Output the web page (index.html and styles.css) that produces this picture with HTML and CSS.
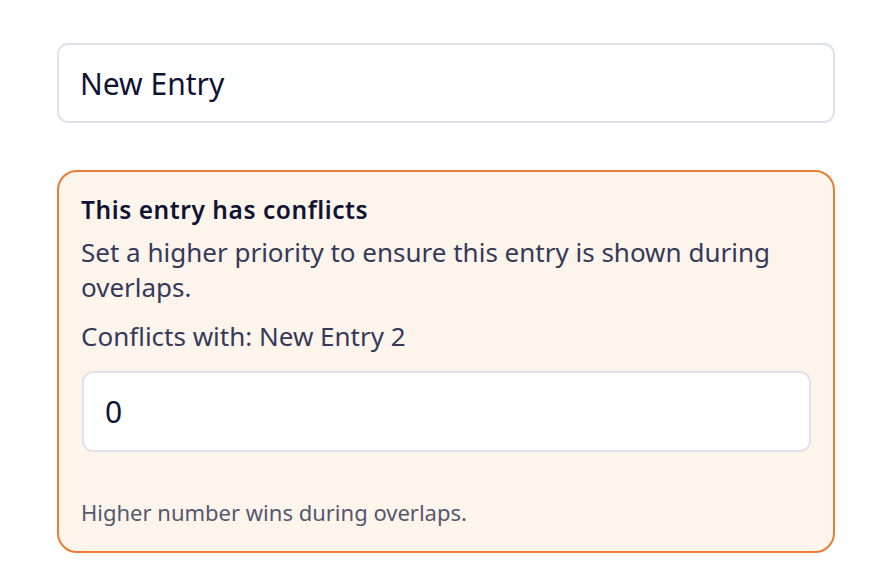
FILE: index.html
```html
<!DOCTYPE html>
<html>
<head>
<meta charset="utf-8">
<link rel="stylesheet" href="styles.css">
</head>
<body>
<div class="page">
  <div class="field">New Entry</div>
  <div class="conflict">
    <div class="title">This entry has conflicts</div>
    <p class="desc">Set a higher priority to ensure this entry is shown during overlaps.</p>
    <p class="with">Conflicts with: New Entry 2</p>
    <div class="field field-inner">0</div>
    <p class="hint">Higher number wins during overlaps.</p>
  </div>
</div>
</body>
</html>
```
FILE: styles.css
```css
* { box-sizing: border-box; }
html, body { margin: 0; padding: 0; background: #ffffff; }
body { font-family: "Noto Sans", "Open Sans", sans-serif; color: #0f1335; }
.page {
  padding: 43px 39px 0 57px;
  display: flex;
  flex-direction: column;
  gap: 47px;
}
.field {
  height: 80px;
  border: 2px solid #dfe2ea;
  border-radius: 11px;
  background: #fff;
  display: flex;
  align-items: center;
  padding: 0 21px;
  font-size: 30px;
  color: #0f1335;
}
.conflict {
  border: 2px solid #ea7d36;
  border-radius: 20px;
  background: #fdf5ec;
  padding: 22px 22px 21px 23px;
  height: 383px;
}
.title { font-size: 24.5px; font-weight: 600; letter-spacing: 0.55px; line-height: 32px; color: #0f1335; margin-left: -1px; }
.desc { margin: 9px 0 0 -1px; font-size: 26px; line-height: 35px; color: #36395a; }
.with { margin: 14px 0 17px -1px; font-size: 26px; line-height: 35px; color: #36395a; }
.field-inner { height: 81px; }
.hint { margin: 45px 0 0 -1px; font-size: 22px; line-height: 30px; color: #55586e; }
```
